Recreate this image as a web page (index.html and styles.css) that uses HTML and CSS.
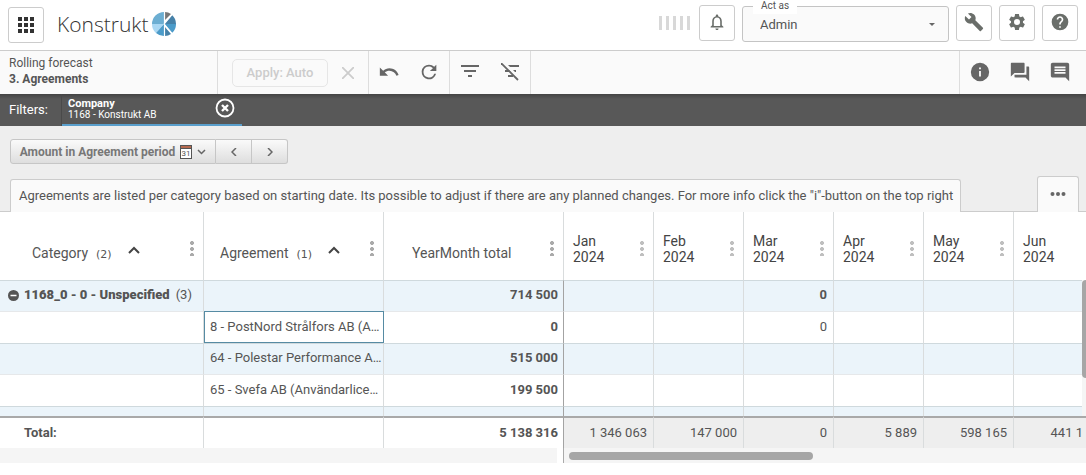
FILE: index.html
```html
<!DOCTYPE html>
<html lang="en">
<head>
<meta charset="utf-8">
<title>Konstrukt - Agreements</title>
<link rel="stylesheet" href="styles.css">
</head>
<body>
<header class="header">
  <button class="square apps" aria-label="Apps">
    <svg width="16" height="16" viewBox="0 0 16 16"><path d="M0 0h4v4H0zM6 0h4v4H6zM12 0h4v4h-4zM0 6h4v4H0zM6 6h4v4H6zM12 6h4v4h-4zM0 12h4v4H0zM6 12h4v4H6zM12 12h4v4h-4z"/></svg>
  </button>
  <div class="logo">
    <span class="logo-text">Konstrukt</span>
    <svg width="24" height="24" viewBox="0 0 24 24">
      <path fill="#6caed2" d="M12 0A12 12 0 0 0 0 12h12z"/>
      <path fill="#a9d7f3" d="M0 12a12 12 0 0 0 4 9l8-9z"/>
      <path fill="#4b9bc9" d="M4 21a12 12 0 0 0 8 3V12z"/>
      <path fill="#777" d="M13 0a12 12 0 0 1 6 2l-6 6z"/>
      <path fill="#4681a8" d="M20 3a12 12 0 0 1 4 9H12z"/>
      <path fill="#4b9bc9" d="M24 12a12 12 0 0 1-4 9l-8-9z"/>
      <path fill="#4681a8" d="M13 15l6 7a12 12 0 0 1-6 2z"/>
      <path d="M12.500 0v24M12 12l8-9.500M12 12l8 9.500" stroke="#fff" stroke-width="1.200"/>
    </svg>
  </div>
  <div class="stripes" aria-hidden="true"><i></i><i></i><i></i><i></i><i></i></div>
  <div class="header-tools">
    <button class="square" aria-label="Notifications"><svg width="24" height="24" viewBox="0 0 24 24"><path d="M12 22c1.100 0 2-.9 2-2h-4c0 1.100.9 2 2 2zm6-6v-5c0-3.070-1.630-5.640-4.500-6.320V4c0-.83-.67-1.500-1.500-1.500s-1.500.67-1.500 1.500v.68C7.640 5.360 6 7.920 6 11v5l-2 2v1h16v-1l-2-2zm-2 1H8v-6c0-2.480 1.510-4.500 4-4.500s4 2.020 4 4.500v6z" transform="translate(2.400 2.400) scale(.8)"/></svg></button>
    <div class="act">
      <label for="role">Act as</label>
      <select id="role"><option>Admin</option></select>
      <svg class="caret" width="6" height="4" viewBox="0 0 6 4"><path d="M0 0h6L3 3z"/></svg>
    </div>
    <button class="square" aria-label="Tools"><svg width="20" height="20" viewBox="0 0 24 24"><path d="M22.700 19l-9.100-9.100c.9-2.300.4-5-1.500-6.900-2-2-5-2.400-7.400-1.300L9 6 6 9 1.600 4.700C.4 7.100.9 10.100 2.900 12.100c1.900 1.900 4.600 2.400 6.900 1.500l9.100 9.100c.4.4 1 .4 1.400 0l2.300-2.300c.5-.4.500-1.100.1-1.400z"/></svg></button>
    <button class="square" aria-label="Settings"><svg width="20" height="20" viewBox="0 0 24 24"><path d="M19.140 12.940c.04-.3.060-.61.060-.94 0-.32-.02-.64-.07-.94l2.030-1.580c.18-.14.23-.41.12-.61l-1.920-3.320c-.12-.22-.37-.29-.59-.22l-2.390.96c-.5-.38-1.030-.7-1.620-.94l-.36-2.540c-.04-.24-.24-.41-.48-.41h-3.840c-.24 0-.43.17-.47.41l-.36 2.540c-.59.24-1.130.57-1.620.94l-2.390-.96c-.22-.08-.47 0-.59.22L2.740 8.870c-.12.21-.08.47.12.61l2.030 1.580c-.05.3-.09.63-.09.94s.02.64.07.94l-2.030 1.580c-.18.14-.23.41-.12.61l1.920 3.320c.12.22.37.29.59.22l2.390-.96c.5.38 1.030.7 1.620.94l.36 2.540c.05.24.24.41.48.41h3.840c.24 0 .44-.17.47-.41l.36-2.540c.59-.24 1.130-.56 1.620-.94l2.390.96c.22.08.47 0 .59-.22l1.920-3.320c.12-.22.07-.47-.12-.61l-2.010-1.580zM12 15.600A3.600 3.600 0 1 1 12 8.400a3.600 3.600 0 0 1 0 7.200z"/></svg></button>
    <button class="square" aria-label="Help"><svg width="20" height="20" viewBox="0 0 24 24"><path d="M12 2a10 10 0 1 0 0 20 10 10 0 0 0 0-20zm1 17h-2v-2h2v2zm2.070-7.750l-.9.920C13.450 12.900 13 13.500 13 15h-2v-.5c0-1.100.45-2.100 1.170-2.830l1.240-1.260c.37-.36.59-.86.59-1.410 0-1.100-.9-2-2-2s-2 .9-2 2H8c0-2.210 1.790-4 4-4s4 1.790 4 4c0 .88-.36 1.680-.93 2.250z"/></svg></button>
  </div>
</header>

<nav class="toolbar">
  <div class="crumb"><span>Rolling forecast</span><strong>3. Agreements</strong></div>
  <div class="tool-group apply-group">
    <button class="apply" disabled>Apply: Auto</button>
    <button class="tool faded" aria-label="Cancel"><svg width="12" height="12" viewBox="0 0 12 12"><path d="M0 0l12 12M12 0L0 12" stroke="#ccc" stroke-width="1.800"/></svg></button>
  </div>
  <div class="tool-group">
    <button class="tool" aria-label="Undo"><svg width="22" height="22" viewBox="0 0 24 24"><path d="M12.500 8c-2.650 0-5.050.99-6.900 2.600L2 7v9h9l-3.620-3.620c1.390-1.160 3.160-1.880 5.120-1.880 3.540 0 6.550 2.310 7.600 5.500l2.370-.78C21.080 11.030 17.150 8 12.500 8z"/></svg></button>
    <button class="tool" aria-label="Refresh"><svg width="22" height="22" viewBox="0 0 24 24"><path d="M17.650 6.350C16.200 4.900 14.210 4 12 4a8 8 0 1 0 7.730 10h-2.080A6 6 0 1 1 12 6c1.660 0 3.140.69 4.220 1.780L13 11h7V4l-2.350 2.350z"/></svg></button>
  </div>
  <div class="tool-group">
    <button class="tool" aria-label="Filter"><svg width="18" height="18" viewBox="0 0 18 18"><path d="M0 2h18v2H0zM3 7h12v2H3zM7 12h4v2H7z"/></svg></button>
    <button class="tool" aria-label="Clear filter"><svg width="18" height="18" viewBox="0 0 18 18"><path d="M7 2h11v2H9zM4 7h4l2 2H4zM12 7h3v2h-1zM7 12h5v2H7z"/><path d="M0 0l17 17" stroke="#666" stroke-width="1.800"/></svg></button>
  </div>
  <div class="tool-group right">
    <button class="tool" aria-label="Information"><svg width="22" height="22" viewBox="0 0 24 24"><path d="M12 2a10 10 0 1 0 0 20 10 10 0 0 0 0-20zm1 15h-2v-6h2v6zm0-8h-2V7h2v2z"/></svg></button>
    <button class="tool" aria-label="Discussion"><svg width="22" height="22" viewBox="0 0 24 24"><path d="M21 6h-2v9H6v2c0 .55.45 1 1 1h11l4 4V7c0-.55-.45-1-1-1zm-4 6V3c0-.55-.45-1-1-1H3c-.55 0-1 .45-1 1v14l4-4h10c.55 0 1-.45 1-1z"/></svg></button>
    <button class="tool" aria-label="Comments"><svg width="22" height="22" viewBox="0 0 24 24"><path d="M22 4c0-1.100-.9-2-2-2H4c-1.100 0-2 .9-2 2v12c0 1.100.9 2 2 2h14l4 4V4zm-4 10H6v-2h12v2zm0-3H6V9h12v2zm0-3H6V6h12v2z"/></svg></button>
  </div>
</nav>

<section class="filters">
  <span class="filters-label">Filters:</span>
  <div class="chip">
    <div class="chip-text"><strong>Company</strong><span>1168 - Konstrukt AB</span></div>
    <button class="chip-close" aria-label="Remove filter"><svg width="20" height="20" viewBox="0 0 20 20"><circle cx="10" cy="10" r="8.500" fill="none" stroke="#fff" stroke-width="1.800"/><path d="M7 7l6 6M13 7l-6 6" stroke="#fff" stroke-width="2.400"/></svg></button>
  </div>
</section>

<section class="controls">
  <div class="period">
    <button class="period-main">Amount in Agreement period
      <svg width="12" height="14" viewBox="0 0 12 14"><path fill="#555" d="M0 0h12v14H0z"/><path fill="#fff" d="M1 4h10v9H1z"/><path fill="#b5694f" d="M1 1h10v2H1z"/><text x="6" y="11" class="cal-day">31</text></svg>
      <svg width="9" height="6" viewBox="0 0 9 6"><path d="M1 1l3.500 3.500L8 1" class="line"/></svg>
    </button>
    <button class="period-step" aria-label="Previous"><svg width="6" height="8" viewBox="0 0 6 8"><path d="M5 0L1 4l4 4" class="line"/></svg></button>
    <button class="period-step" aria-label="Next"><svg width="6" height="8" viewBox="0 0 6 8"><path d="M1 0l4 4-4 4" class="line"/></svg></button>
  </div>
  <div class="tabs">
    <p class="note">Agreements are listed per category based on starting date. Its possible to adjust if there are any planned changes. For more info click the "i"-button on the top right</p>
    <button class="more" aria-label="More"><svg width="16" height="4" viewBox="0 0 16 4"><circle cx="2.500" cy="2" r="2"/><circle cx="8" cy="2" r="2"/><circle cx="13.500" cy="2" r="2"/></svg></button>
  </div>
</section>

<main class="grid">
  <table class="table">
    <colgroup><col class="c-cat"><col class="c-wide"><col class="c-wide"><col class="c-month"><col class="c-month"><col class="c-month"><col class="c-month"><col class="c-month"><col></colgroup>
    <thead>
      <tr>
        <th scope="col"><div class="head category"><span>Category</span><small>(2)</small><svg class="sort" width="12" height="8" viewBox="0 0 12 8"><path d="M1 7l5-5 5 5"/></svg><i class="dots"></i></div></th>
        <th scope="col"><div class="head agreement"><span>Agreement</span><small>(1)</small><svg class="sort" width="12" height="8" viewBox="0 0 12 8"><path d="M1 7l5-5 5 5"/></svg><i class="dots"></i></div></th>
        <th scope="col"><div class="head total"><span>YearMonth total</span><i class="dots"></i></div></th>
        <th scope="col"><div class="head month"><span>Jan<br>2024</span><i class="dots"></i></div></th>
        <th scope="col"><div class="head month"><span>Feb<br>2024</span><i class="dots"></i></div></th>
        <th scope="col"><div class="head month"><span>Mar<br>2024</span><i class="dots"></i></div></th>
        <th scope="col"><div class="head month"><span>Apr<br>2024</span><i class="dots"></i></div></th>
        <th scope="col"><div class="head month"><span>May<br>2024</span><i class="dots"></i></div></th>
        <th scope="col"><div class="head month"><span>Jun<br>2024</span></div></th>
      </tr>
    </thead>
    <tbody>
      <tr class="tint group">
        <td class="group-name"><button class="collapse" aria-label="Collapse"><svg width="11" height="11" viewBox="0 0 11 11"><circle cx="5.500" cy="5.500" r="5.500" fill="#555"/><path d="M2.500 5.500h6" stroke="#fff" stroke-width="1.500"/></svg></button><b>1168_0 - 0 - Unspecified</b><span>(3)</span></td>
        <td></td><td class="sum">714 500</td><td></td><td></td><td>0</td><td></td><td></td><td></td>
      </tr>
      <tr class="plain">
        <td></td><td class="name selected">8 - PostNord Strålfors AB (A…</td><td class="sum">0</td><td></td><td></td><td>0</td><td></td><td></td><td></td>
      </tr>
      <tr class="tint">
        <td></td><td class="name">64 - Polestar Performance A…</td><td class="sum">515 000</td><td></td><td></td><td></td><td></td><td></td><td></td>
      </tr>
      <tr class="plain">
        <td></td><td class="name">65 - Svefa AB (Användarlice…</td><td class="sum">199 500</td><td></td><td></td><td></td><td></td><td></td><td></td>
      </tr>
      <tr class="tint peek">
        <td></td><td></td><td class="sum"></td><td></td><td></td><td></td><td></td><td></td><td></td>
      </tr>
    </tbody>
    <tfoot>
      <tr>
        <th scope="row" class="total-label">Total:</th><td></td><td class="sum">5 138 316</td><td>1 346 063</td><td>147 000</td><td>0</td><td>5 889</td><td>598 165</td><td class="cut">441 1</td>
      </tr>
    </tfoot>
  </table>
  <div class="vscroll"><div class="vthumb"></div></div>
  <div class="scrollers"><div class="hfixed"></div><div class="htrack"><div class="hthumb"></div></div></div>
</main>
</body>
</html>
```

FILE: styles.css
```css
* { box-sizing: border-box; }
body { margin: 0; background: #fff; color: #555; font: 13px/16px Roboto, sans-serif; overflow: hidden; }
button { display: flex; align-items: center; justify-content: center; margin: 0; padding: 0; border: 0; background: none; color: inherit; font: inherit; }
svg { display: block; flex: none; fill: #666; }

.header { display: flex; align-items: flex-start; height: 51px; padding: 5px 8px 0; border-bottom: 1px solid #ccc; }
.square { width: 36px; height: 36px; padding-bottom: 2px; border: 1px solid #ccc; border-radius: 3px; background: #fff; }
.square svg { fill: #6a6e6a; }
.apps { margin-top: 2px; padding: 0; }
.apps svg { fill: #333; }
.logo { display: flex; align-items: center; gap: 4px; margin: 7px 0 0 13px; }
.logo-text { color: #333; font: 300 21px/24px "Open Sans", sans-serif; }
.stripes { display: flex; gap: 4px; margin: 11px 9px 0 auto; }
.stripes i { width: 3px; height: 14px; background: #d8d8d8; }
.header-tools { display: flex; gap: 7px; }
.act { position: relative; width: 207px; padding-top: 1px; }
.act label { position: absolute; left: 11px; top: -7px; padding: 0 8px; background: #fff; font-size: 10px; line-height: 16px; }
.act select { display: block; width: 100%; height: 36px; padding: 0 17px; appearance: none; border: 1px solid #c4c4c4; border-radius: 3px; background: #fafafa; color: #555; font: 13px Roboto, sans-serif; }
.caret { position: absolute; right: 14px; top: 18px; }

.toolbar { display: flex; height: 43px; background: #fafafa; }
.crumb { display: flex; flex-direction: column; width: 218px; padding: 4px 9px; border-right: 1px solid #ddd; font-size: 12px; }
.tool-group { display: flex; border-right: 1px solid #ddd; }
.tool { width: 40px; height: 41px; }
.apply-group { align-items: center; padding: 0 0 0 14px; }
.apply { width: 96px; height: 28px; border: 1px solid #e6e6e6; border-radius: 5px; color: #ccc; font-weight: 500; }
.right { margin-left: auto; padding-right: 6px; border-right: 0; border-left: 1px solid #ddd; }

.filters { display: flex; height: 32px; background: linear-gradient(#444, #585858 5px); color: #fff; }
.filters-label { width: 62px; padding: 8px 9px; border-right: 1px solid #4a4a4a; }
.chip { display: flex; align-items: center; justify-content: space-between; width: 180px; padding: 0 7px 0 6px; border-bottom: 2px solid #5a9fcc; }
.chip-close { margin-bottom: 2px; }
.chip-text { display: flex; flex-direction: column; font-size: 10px; line-height: 11px; }
.chip-text strong { font-size: 11px; }

.controls { padding: 13px 0 0; background: #eee; }
.period { display: flex; margin-left: 10px; }
.period button { height: 25px; border: 1px solid #c6c6c6; border-left-width: 0; background: linear-gradient(#fafafa, #dedede); color: #777; }
.period .period-main { gap: 5px; width: 206px; border-left-width: 1px; border-radius: 3px 0 0 3px; font-size: 12px; font-weight: 700; }
.period-step { width: 36px; }
.period-step:last-child { border-radius: 0 3px 3px 0; }
.line { fill: none; stroke: #666; stroke-width: 1.5; }
.cal-day { font: 8px Roboto, sans-serif; text-anchor: middle; fill: #555; }
.tabs { display: flex; align-items: flex-end; justify-content: space-between; margin-top: 12px; padding: 0 7px 0 10px; border-bottom: 1px solid #ccc; }
.note, .more { margin: 0 0 -1px; border: 1px solid #ccc; border-bottom: 0; border-radius: 3px 3px 0 0; background: #fafafa; }
.note { height: 33px; padding: 8px 7px 0 8px; white-space: nowrap; }
.tabs .more { width: 42px; height: 36px; padding-bottom: 2px; border: 1px solid #ccc; border-bottom: 0; background: #fafafa; }

.grid { position: relative; }
.table { width: 100%; table-layout: fixed; border-collapse: separate; border-spacing: 0; }
.c-cat { width: 204px; }
.c-wide { width: 180px; }
.c-month { width: 90px; }
.table th, .table td { padding: 0 6px; border-right: 1px solid #d9dcdd; white-space: nowrap; }
.table tr > :last-child { border-right: 0; }
.table td { text-align: right; }
.table thead th { height: 68px; padding: 0; font-weight: 400; font-size: 14px; text-align: left; }
.head { display: flex; align-items: center; height: 68px; padding-right: 9px; }
.category, .agreement, .total { padding-top: 14px; }
.category { padding-left: 32px; }
.agreement { padding-left: 16px; }
.total { padding-left: 28px; }
.month { padding: 6px 9px 0 9px; color: #444; }
.head small { margin: 3px 0 0 8px; font: 11px "DejaVu Sans", sans-serif; }
.sort { margin: -6px 0 0 16px; fill: none; stroke: #444; stroke-width: 2; }
.dots { width: 4px; height: 16px; margin: -10px 0 0 auto; background: radial-gradient(circle, #aaa 0 1.8px, transparent 2.2px) 0 0 / 4px 6px; }
.month .dots { margin-top: -2px; opacity: .75; }
.table tbody td { height: 31px; border-top: 1px solid #e6e8ea; }
.table .tint td { padding-bottom: 2px; background: #ebf4fa; border-top-color: #cfd9dd; }
.table tbody .plain td { height: 32px; padding-bottom: 2px; }
.table .group td { font-weight: 700; }
.table .group .group-name { padding-left: 8px; text-align: left; }
.group-name span { margin-left: 6px; font-weight: 400; }
.collapse { display: inline-flex; margin-right: 5px; vertical-align: -2px; }
.table .name { padding-right: 0; text-align: left; }
.table .plain .selected { outline: 1px solid #568ba3; outline-offset: -1px; }
.table .sum { padding-right: 5px; border-right-color: #a3a3a3; font-weight: 700; }
.table tbody .peek td { height: 10px; padding: 0; }
.table tfoot th, .table tfoot td { height: 32px; border-top: 2px solid #a9a9a9; }
.table tfoot td { background: #eee; }
.table tfoot td:nth-child(-n+3) { background: #fff; }
.table tfoot .total-label { padding-left: 24px; text-align: left; }
.table tfoot .cut { padding-right: 3px; }

.vscroll { position: absolute; top: 68px; right: 0; width: 4px; height: 136px; background: #f5f5f5; }
.vthumb { height: 98px; border-radius: 4px 0 0 4px; background: #a6a6a6; }
.scrollers { display: flex; height: 15px; }
.hfixed { width: 564px; border-right: 1px solid #aaa; background: linear-gradient(to left, #fff 6px, #f5f5f5 6px); }
.htrack { flex: 1; padding: 4px 5px; background: #f5f5f5; }
.hthumb { width: 244px; height: 8px; border-radius: 4px; background: #a6a6a6; }
```
